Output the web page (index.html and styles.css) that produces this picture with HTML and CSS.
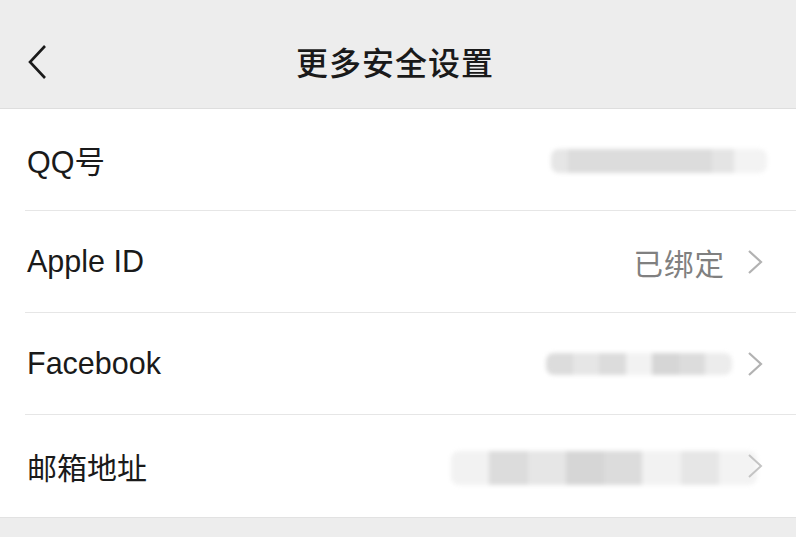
FILE: index.html
```html
<!DOCTYPE html>
<html lang="zh-CN">
<head>
    <meta charset="UTF-8">
    <meta name="viewport" content="width=device-width, initial-scale=1.0">
    <title>更多安全设置</title>
    <link rel="stylesheet" href="styles.css">
</head>
<body>
    <div class="header">
        <div class="back">
            <svg width="22" height="36" viewBox="0 0 22 36"><path d="M19 2 L4 18 L19 34" fill="none" stroke="#1a1a1a" stroke-width="2.6" stroke-linejoin="miter"/></svg>
        </div>
        <h1 class="title">更多安全设置</h1>
        <div></div>
    </div>

    <div class="list">
        <div class="row">
            <span class="label">QQ号</span>
            <div class="value no-arrow">
                <div class="mask mask-qq">
                    <span class="b1"></span><span class="b2"></span><span class="b3"></span><span class="b4"></span>
                </div>
            </div>
        </div>
        <div class="row">
            <span class="label">Apple ID</span>
            <div class="value">
                <span class="status">已绑定</span>
                <svg class="arrow" width="16" height="26" viewBox="0 0 16 26"><path d="M2 2 L14 13 L2 24" fill="none" stroke="#b2b2b2" stroke-width="2.2"/></svg>
            </div>
        </div>
        <div class="row">
            <span class="label">Facebook</span>
            <div class="value tight">
                <div class="mask mask-fb">
                    <span class="b2"></span><span class="b1"></span><span class="b2"></span><span class="b5"></span><span class="b3"></span><span class="b2"></span><span class="b4"></span>
                </div>
                <svg class="arrow" width="16" height="26" viewBox="0 0 16 26"><path d="M2 2 L14 13 L2 24" fill="none" stroke="#b2b2b2" stroke-width="2.2"/></svg>
            </div>
        </div>
        <div class="row">
            <span class="label">邮箱地址</span>
            <div class="value overlap">
                <div class="mask mask-mail">
                    <span class="b5"></span><span class="b2"></span><span class="b1"></span><span class="b3"></span><span class="b2"></span><span class="b5"></span><span class="b1"></span><span class="b4"></span>
                </div>
                <svg class="arrow" width="16" height="26" viewBox="0 0 16 26"><path d="M2 2 L14 13 L2 24" fill="none" stroke="#c4c4c4" stroke-width="2"/></svg>
            </div>
        </div>
    </div>

    <div class="footer"></div>
</body>
</html>
```

FILE: styles.css
```css
body {
    margin: 0;
    background: #ededed;
    font-family: "Liberation Sans", "Noto Sans CJK SC", sans-serif;
    color: #1a1a1a;
}
.header {
    display: grid;
    grid-template-columns: 1fr auto 1fr;
    align-items: center;
    height: 96px;
    padding-top: 12px;
    background: #ededed;
    border-bottom: 1px solid #dedede;
}
.back {
    padding-left: 26px;
    display: flex;
    align-items: center;
    padding-top: 3px;
}
.title {
    margin: 0;
    font-family: "Noto Sans CJK SC", sans-serif;
    font-size: 32px;
    font-weight: 500;
    letter-spacing: 1px;
    color: #1a1a1a;
    padding-top: 2px;
    padding-right: 6px;
}
.list {
    background: #fff;
    padding-left: 25px;
}
.row {
    display: flex;
    align-items: center;
    justify-content: space-between;
    height: 101px;
    border-bottom: 1px solid #e6e6e6;
    padding-right: 33px;
}
.row:last-child {
    border-bottom: none;
    height: 102px;
}
.label {
    font-size: 30.5px;
    padding-left: 2px;
    color: #1a1a1a;
}
.row:last-child .label {
    font-family: "Noto Sans CJK SC", sans-serif;
    font-size: 30px;
}
.value {
    display: flex;
    align-items: center;
    gap: 22px;
}
.value.tight {
    gap: 15px;
}
.value.overlap {
    gap: 0;
}
.value.overlap .arrow {
    margin-left: -10px;
}
.value.no-arrow {
    margin-right: -4px;
}
.status {
    font-family: "Noto Sans CJK SC", sans-serif;
    font-size: 29.5px;
    color: #808080;
    letter-spacing: 1px;
}
.arrow {
    display: block;
    position: relative;
}
.mask {
    display: flex;
    filter: blur(2px);
    border-radius: 8px;
    overflow: hidden;
}
.mask span {
    display: block;
    height: 100%;
    flex: 1;
}
.mask .b1 { background: #e6e6e6; }
.mask .b2 { background: #dcdcdc; }
.mask .b3 { background: #d6d6d6; }
.mask .b4 { background: #ececec; }
.mask .b5 { background: #f2f2f2; }
.mask-qq {
    width: 216px;
    height: 24px;
    margin-top: 2px;
}
.mask-qq .b1 { flex: 0.3; }
.mask-qq .b2 { flex: 2.6; }
.mask-qq .b3 { flex: 0.4; background: #e4e4e4; }
.mask-qq .b4 { flex: 0.6; background: #f3f3f3; }
.mask-fb {
    width: 186px;
    height: 22px;
}
.mask-mail {
    width: 306px;
    height: 34px;
    margin-top: 4px;
}
.mask-mail .b4 { background: #f3f3f3; }
.footer {
    height: 20px;
    background: #ededed;
    border-top: 1px solid #e2e2e2;
}
```
